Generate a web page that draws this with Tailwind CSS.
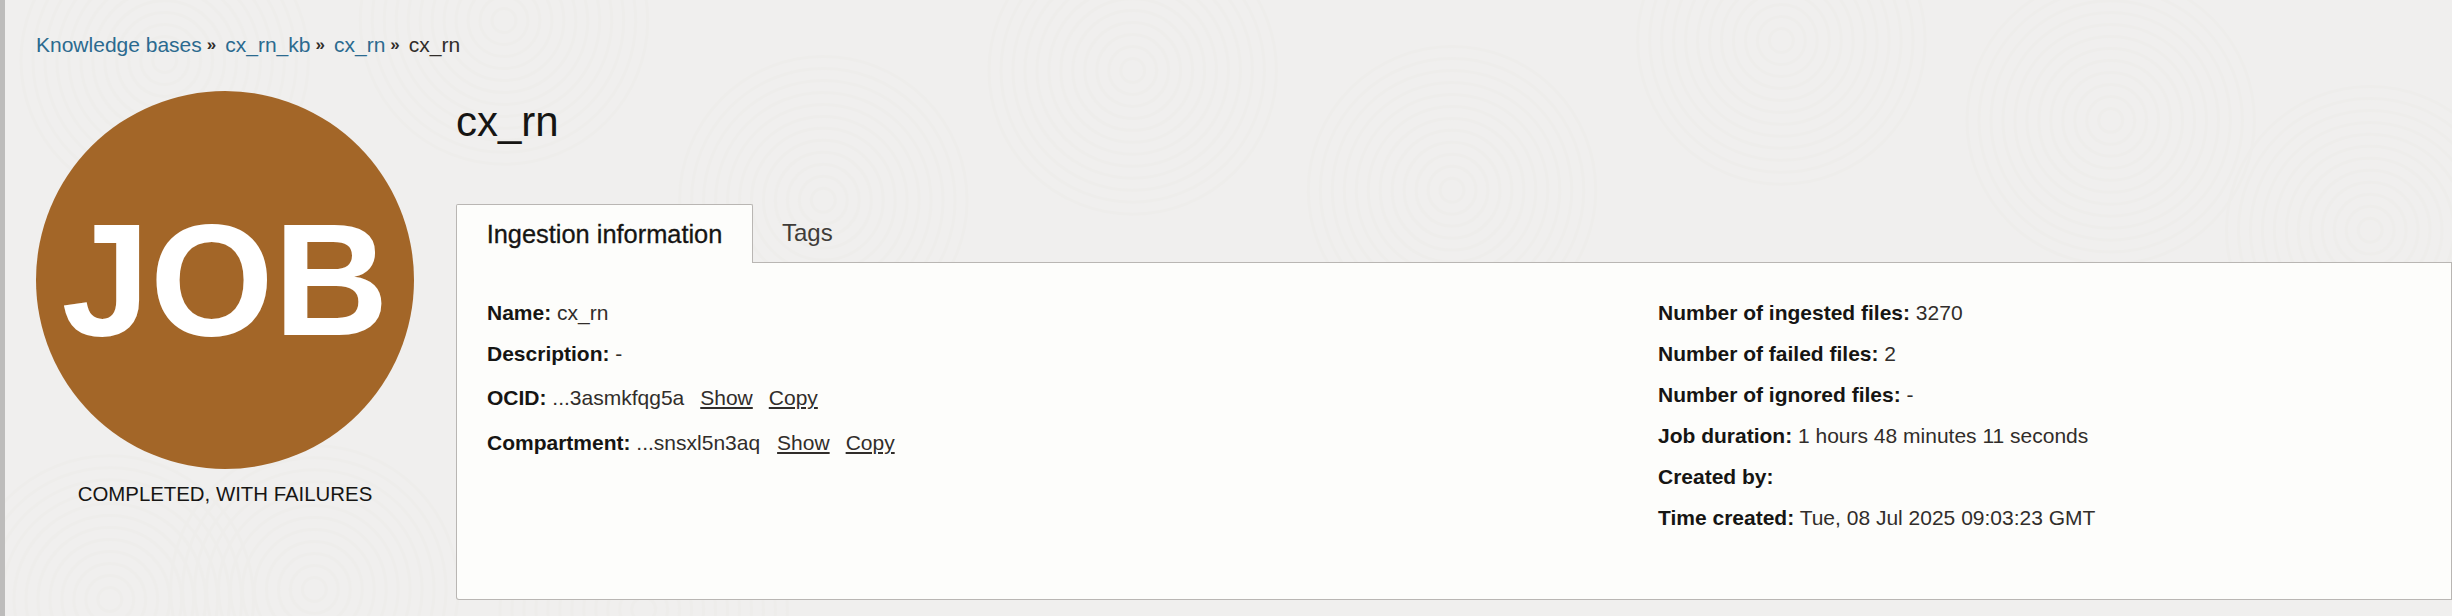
<!DOCTYPE html>
<html lang="en">
<head>
<meta charset="utf-8">
<title>cx_rn</title>
<script src="https://cdn.jsdelivr.net/npm/@tailwindcss/browser@4"></script>
</head>
<body class="m-0">
<div class="relative h-[616px] w-full overflow-hidden border-l-[5px] border-[#bdbcbb] bg-[#f0efee] font-['Liberation_Sans',Arial,sans-serif] text-[#161513]">
  <svg class="absolute inset-0 h-full w-full" viewBox="0 0 2452 616" fill="none" stroke="#eeedeb" stroke-width="3" aria-hidden="true">
    <defs>
      <g id="rings">
        <circle r="12"/><circle r="24"/><circle r="36"/><circle r="48"/><circle r="60"/><circle r="72"/><circle r="84"/><circle r="96"/><circle r="108"/><circle r="120"/><circle r="132"/><circle r="144"/>
      </g>
    </defs>
    <use href="#rings" x="105" y="600"/>
    <use href="#rings" x="310" y="590"/>
    <use href="#rings" x="160" y="60"/>
    <use href="#rings" x="500" y="20"/>
    <use href="#rings" x="820" y="200"/>
    <use href="#rings" x="1130" y="70"/>
    <use href="#rings" x="1450" y="190"/>
    <use href="#rings" x="1780" y="40"/>
    <use href="#rings" x="2110" y="120"/>
    <use href="#rings" x="2370" y="230"/>
    <use href="#rings" x="640" y="610"/>
  </svg>

  <div class="relative flex h-full flex-col pl-[31px] pr-0 pt-[33px]">
    <nav class="flex h-6 items-center text-[21px] leading-6">
      <a class="text-[#2b6a8f]">Knowledge bases</a>
      <span class="ml-[5px] mr-[9px] text-[17px] font-bold text-[#312d2a]">»</span>
      <a class="text-[#2b6a8f]">cx_rn_kb</a>
      <span class="ml-[5px] mr-[9px] text-[17px] font-bold text-[#312d2a]">»</span>
      <a class="text-[#2b6a8f]">cx_rn</a>
      <span class="ml-[5px] mr-[9px] text-[17px] font-bold text-[#312d2a]">»</span>
      <span class="text-[#312d2a]">cx_rn</span>
    </nav>

    <div class="mt-[34px] flex flex-1 items-start">
      <aside class="flex w-[378px] shrink-0 flex-col items-center">
        <div class="flex h-[378px] w-[378px] items-center justify-center rounded-full bg-[#a36628]">
          <span class="text-[159px] leading-none font-bold text-white">JOB</span>
        </div>
        <p class="mt-[13px] text-[20.4px] leading-6 whitespace-nowrap">COMPLETED, WITH FAILURES</p>
      </aside>

      <main class="ml-[42px] min-w-0 flex-1">
        <h1 class="pt-[6px] text-[42px] leading-[50px] font-normal">cx_rn</h1>

        <div class="relative z-10 mt-[57px] flex h-[59px] items-stretch">
          <div class="flex w-[297px] items-center justify-center rounded-t-[2px] border border-b-0 border-[#b9b6b3] bg-[#fdfdfb] text-[25.4px] [-webkit-text-stroke:0.3px_#161513]">Ingestion information</div>
          <div class="flex flex-1 items-center border-b border-[#b9b6b3] pl-[29px] text-[24px] text-[#403c38]">Tags</div>
        </div>

        <section class="grid h-[337px] grid-cols-[1171px_1fr] rounded-bl-[3px] border border-t-0 border-[#b9b6b3] bg-[#fdfdfb] pt-[38px] pl-[30px] text-[21px] leading-6 text-[#312d2a]">
          <div class="flex flex-col">
            <p class="mb-[17px]"><b class="text-[#161513]">Name:</b> cx_rn</p>
            <p class="mb-[20px]"><b class="text-[#161513]">Description:</b> -</p>
            <p class="mb-[21px] flex gap-[16px] whitespace-pre"><span><b class="text-[#161513]">OCID:</b> ...3asmkfqg5a</span><a class="underline">Show</a><a class="underline">Copy</a></p>
            <p class="flex gap-[16px] whitespace-pre"><span><b class="text-[#161513]">Compartment:</b> ...snsxl5n3aq</span><a class="ml-px underline">Show</a><a class="underline">Copy</a></p>
          </div>
          <div class="flex flex-col gap-[17px]">
            <p><b class="text-[#161513]">Number of ingested files:</b> 3270</p>
            <p><b class="text-[#161513]">Number of failed files:</b> 2</p>
            <p><b class="text-[#161513]">Number of ignored files:</b> -</p>
            <p><b class="text-[#161513]">Job duration:</b> 1 hours 48 minutes 11 seconds</p>
            <p><b class="text-[#161513]">Created by:</b></p>
            <p><b class="text-[#161513]">Time created:</b> Tue, 08 Jul 2025 09:03:23 GMT</p>
          </div>
        </section>
      </main>
    </div>
  </div>
</div>
</body>
</html>
